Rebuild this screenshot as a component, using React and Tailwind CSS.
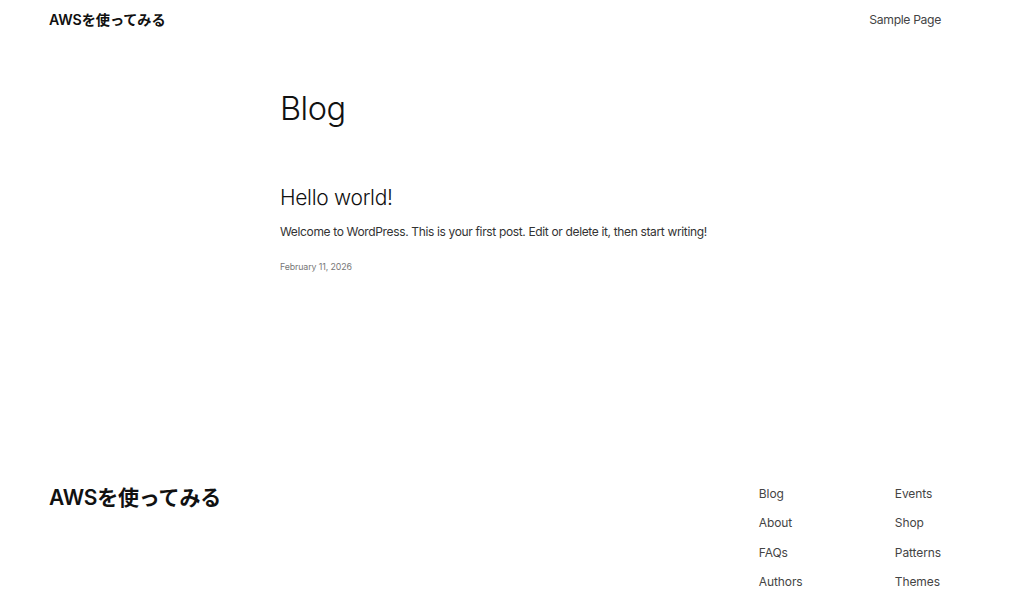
import React from "react";

const font = { fontFamily: '"Inter", "Noto Sans CJK JP", sans-serif' };

export default function App() {
  const col1 = ["Blog", "About", "FAQs", "Authors"];
  const col2 = ["Events", "Shop", "Patterns", "Themes"];
  return (
    <div className="min-h-[615px] bg-white text-[#111111]" style={font}>
      {/* Header */}
      <header className="flex h-[40px] items-center justify-between pl-[49px] pr-[83px]">
        <div className="text-[14.2px] font-semibold tracking-[-0.1px]">AWSを使ってみる</div>
        <nav className="text-[12.2px] tracking-[-0.35px] text-[#444444]">Sample Page</nav>
      </header>

      {/* Main */}
      <main className="ml-[280px] w-[645px] pb-[211px]">
        <h1 className="mt-[47px] text-[32.5px] font-light leading-[44px] tracking-[-0.5px]">Blog</h1>
        <article className="mt-[53px]">
          <h2 className="text-[21px] font-light leading-[28px] tracking-[-0.3px]">Hello world!</h2>
          <p className="mt-[10px] text-[12px] leading-[20px] tracking-[-0.35px] text-[#333333]">
            Welcome to WordPress. This is your first post. Edit or delete it, then start writing!
          </p>
          <div className="mt-[18px] text-[8.8px] tracking-[-0.1px] text-[#777777]">February 11, 2026</div>
        </article>
      </main>

      {/* Footer */}
      <footer className="flex justify-between pl-[49px] pr-[83px]">
        <div className="-mt-[2px] text-[21px] font-semibold tracking-[-0.2px]">AWSを使ってみる</div>
        <div className="flex gap-[80px] text-[12px] tracking-[-0.1px] text-[#444444]">
          <ul className="flex w-[56px] flex-col gap-[10px] leading-[19.3px]">
            {col1.map((t) => (
              <li key={t}>{t}</li>
            ))}
          </ul>
          <ul className="flex flex-col gap-[10px] leading-[19.3px]">
            {col2.map((t) => (
              <li key={t}>{t}</li>
            ))}
          </ul>
        </div>
      </footer>
    </div>
  );
}
